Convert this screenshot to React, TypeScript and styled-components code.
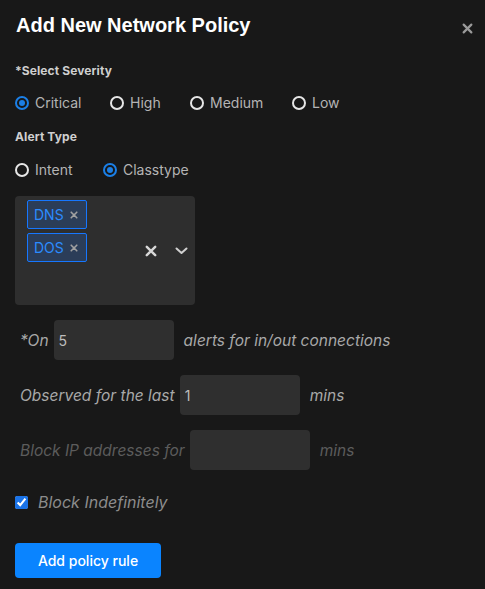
import styled, { createGlobalStyle } from 'styled-components';

const GlobalStyle = createGlobalStyle`
  html, body {
    margin: 0;
    padding: 0;
    background: #181818;
  }
  body {
    font-family: Inter, "Noto Sans", sans-serif;
  }
`;

type RadioOption = {
  label: string;
  checked?: boolean;
  width: number;
}

const severities: RadioOption[] = [
  { label: 'Critical', checked: true, width: 95 },
  { label: 'High', width: 80 },
  { label: 'Medium', width: 102 },
  { label: 'Low', width: 60 },
];

const alertTypes: RadioOption[] = [
  { label: 'Intent', width: 88 },
  { label: 'Classtype', checked: true, width: 100 },
];

const tags = ['DNS', 'DOS'];

const CloseIcon = ({ size, color }: { size: number; color: string }) => (
  <svg width={size} height={size} viewBox="0 0 10 10">
    <path d="M1.5 1.5 L8.5 8.5 M8.5 1.5 L1.5 8.5" stroke={color} strokeWidth="2" strokeLinecap="round" />
  </svg>
);

const App = () => {
  return (
    <Page>
      <GlobalStyle />
      <Header>
        <Title>Add New Network Policy</Title>
        <CloseButton>
          <CloseIcon size={11} color="#9a9a9a" />
        </CloseButton>
      </Header>

      <Label $top={24}>*Select Severity</Label>
      <RadioRow $top={14}>
        {severities.map((o) => (
          <RadioItem key={o.label} style={{ width: o.width }}>
            <RadioCircle $checked={!!o.checked} />
            <RadioText>{o.label}</RadioText>
          </RadioItem>
        ))}
      </RadioRow>

      <Label $top={16}>Alert Type</Label>
      <RadioRow $top={15}>
        {alertTypes.map((o) => (
          <RadioItem key={o.label} style={{ width: o.width }}>
            <RadioCircle $checked={!!o.checked} />
            <RadioText>{o.label}</RadioText>
          </RadioItem>
        ))}
      </RadioRow>

      <SelectBox>
        <TagList>
          {tags.map((t) => (
            <Tag key={t}>
              <TagText>{t}</TagText>
              <TagRemove>
                <CloseIcon size={8} color="#a0a0a0" />
              </TagRemove>
            </Tag>
          ))}
        </TagList>
        <Indicators>
          <Indicator $clear>
            <CloseIcon size={12} color="#d8d8d8" />
          </Indicator>
          <Indicator>
            <svg width="13" height="8" viewBox="0 0 13 8">
              <path d="M1.5 1.5 L6.5 6 L11.5 1.5" stroke="#d0d0d0" strokeWidth="2" fill="none" strokeLinecap="round" strokeLinejoin="round" />
            </svg>
          </Indicator>
        </Indicators>
      </SelectBox>

      <RuleRow $top={15}>
        <RuleText>*On</RuleText>
        <NumberInput defaultValue="5" />
        <RuleText>alerts for in/out connections</RuleText>
      </RuleRow>
      <RuleRow $top={15}>
        <RuleText>Observed for the last</RuleText>
        <NumberInput defaultValue="1" />
        <RuleText>mins</RuleText>
      </RuleRow>
      <RuleRow $top={15} $disabled>
        <RuleText>Block IP addresses for</RuleText>
        <NumberInput disabled />
        <RuleText>mins</RuleText>
      </RuleRow>

      <CheckRow>
        <CheckBox type="checkbox" defaultChecked />
        <CheckText>Block Indefinitely</CheckText>
      </CheckRow>

      <SubmitButton>Add policy rule</SubmitButton>
    </Page>
  );
};

export default App;

const Page = styled.div`
  width: 485px;
  height: 589px;
  box-sizing: border-box;
  padding: 11px 12px 0 15px;
  display: flex;
  flex-direction: column;
  align-items: flex-start;
  background: #181818;
  overflow: hidden;
`;

const Header = styled.div`
  width: 100%;
  display: flex;
  justify-content: space-between;
  align-items: center;
`;

const Title = styled.h1`
  margin: 0 0 0 1px;
  font-family: "Liberation Sans", Arial, sans-serif;
  font-size: 20px;
  font-weight: 700;
  line-height: 28px;
  color: #ffffff;
`;

const CloseButton = styled.div`
  display: flex;
  margin-top: 6px;
  margin-right: 0;
`;

const Label = styled.div<{ $top: number }>`
  margin-top: ${(p) => p.$top}px;
  font-size: 12px;
  font-weight: 700;
  line-height: 16px;
  color: #cfcfcf;
  letter-spacing: 0.1px;
`;

const RadioRow = styled.div<{ $top: number }>`
  margin-top: ${(p) => p.$top}px;
  display: flex;
  align-items: center;
  height: 20px;
`;

const RadioItem = styled.div`
  display: flex;
  align-items: center;
  gap: 6px;
`;

const RadioCircle = styled.span<{ $checked: boolean }>`
  box-sizing: border-box;
  width: 14px;
  height: 14px;
  border-radius: 50%;
  border: 2px solid ${(p) => (p.$checked ? '#1b7fe6' : '#e6e6e6')};
  display: flex;
  align-items: center;
  justify-content: center;

  &::after {
    content: '';
    width: 6px;
    height: 6px;
    border-radius: 50%;
    background: #1b7fe6;
    display: ${(p) => (p.$checked ? 'block' : 'none')};
  }
`;

const RadioText = styled.span`
  font-size: 14px;
  color: #b4b4b4;
  line-height: 20px;
`;

const SelectBox = styled.div`
  margin-top: 16px;
  width: 180px;
  height: 109px;
  box-sizing: border-box;
  background: #2e2e2e;
  border-radius: 4px;
  display: flex;
  align-items: stretch;
`;

const TagList = styled.div`
  flex: 1;
  padding: 4px 0 0 12px;
  display: flex;
  flex-wrap: wrap;
  align-content: flex-start;
  gap: 4px;
`;

const Tag = styled.div`
  box-sizing: border-box;
  height: 29px;
  width: 60px;
  padding: 0 8px 0 6px;
  display: flex;
  align-items: center;
  justify-content: space-between;
  border: 1px solid #1677ff;
  border-radius: 2px;
  background: #2b3d58;
`;

const TagText = styled.span`
  font-size: 14px;
  color: #2b8cff;
`;

const TagRemove = styled.span`
  display: flex;
`;

const Indicators = styled.div`
  display: flex;
  align-items: center;
`;

const Indicator = styled.div<{ $clear?: boolean }>`
  display: flex;
  padding: 0 7px;
  margin-right: ${(p) => (p.$clear ? 4 : 0)}px;
`;

const RuleRow = styled.div<{ $top: number; $disabled?: boolean }>`
  margin-top: ${(p) => p.$top}px;
  padding-left: 5px;
  display: flex;
  align-items: center;
  gap: 5px;
  color: ${(p) => (p.$disabled ? '#5c5c5c' : '#a8a8a8')};

  & > input + span {
    margin-left: 5px;
  }
`;

const RuleText = styled.span`
  font-size: 15.5px;
  font-style: italic;
  white-space: nowrap;
`;

const NumberInput = styled.input`
  box-sizing: border-box;
  width: 120px;
  height: 40px;
  padding: 0 5px;
  border: none;
  border-radius: 4px;
  background: #2f2f2f;
  color: #bdbdbd;
  font-family: Inter, sans-serif;
  font-size: 14px;
  outline: none;
`;

const CheckRow = styled.div`
  margin-top: 22px;
  display: flex;
  align-items: center;
  gap: 10px;
`;

const CheckBox = styled.input`
  margin: 0;
  width: 13px;
  height: 13px;
  accent-color: #1a73e8;
`;

const CheckText = styled.span`
  font-size: 16px;
  font-style: italic;
  color: #8c8c8c;
`;

const SubmitButton = styled.button`
  margin-top: 31px;
  width: 146px;
  height: 35px;
  border: none;
  border-radius: 4px;
  background: #0a84ff;
  color: #ffffff;
  font-family: Inter, sans-serif;
  font-size: 14px;
  font-weight: 500;
  cursor: pointer;
`;
